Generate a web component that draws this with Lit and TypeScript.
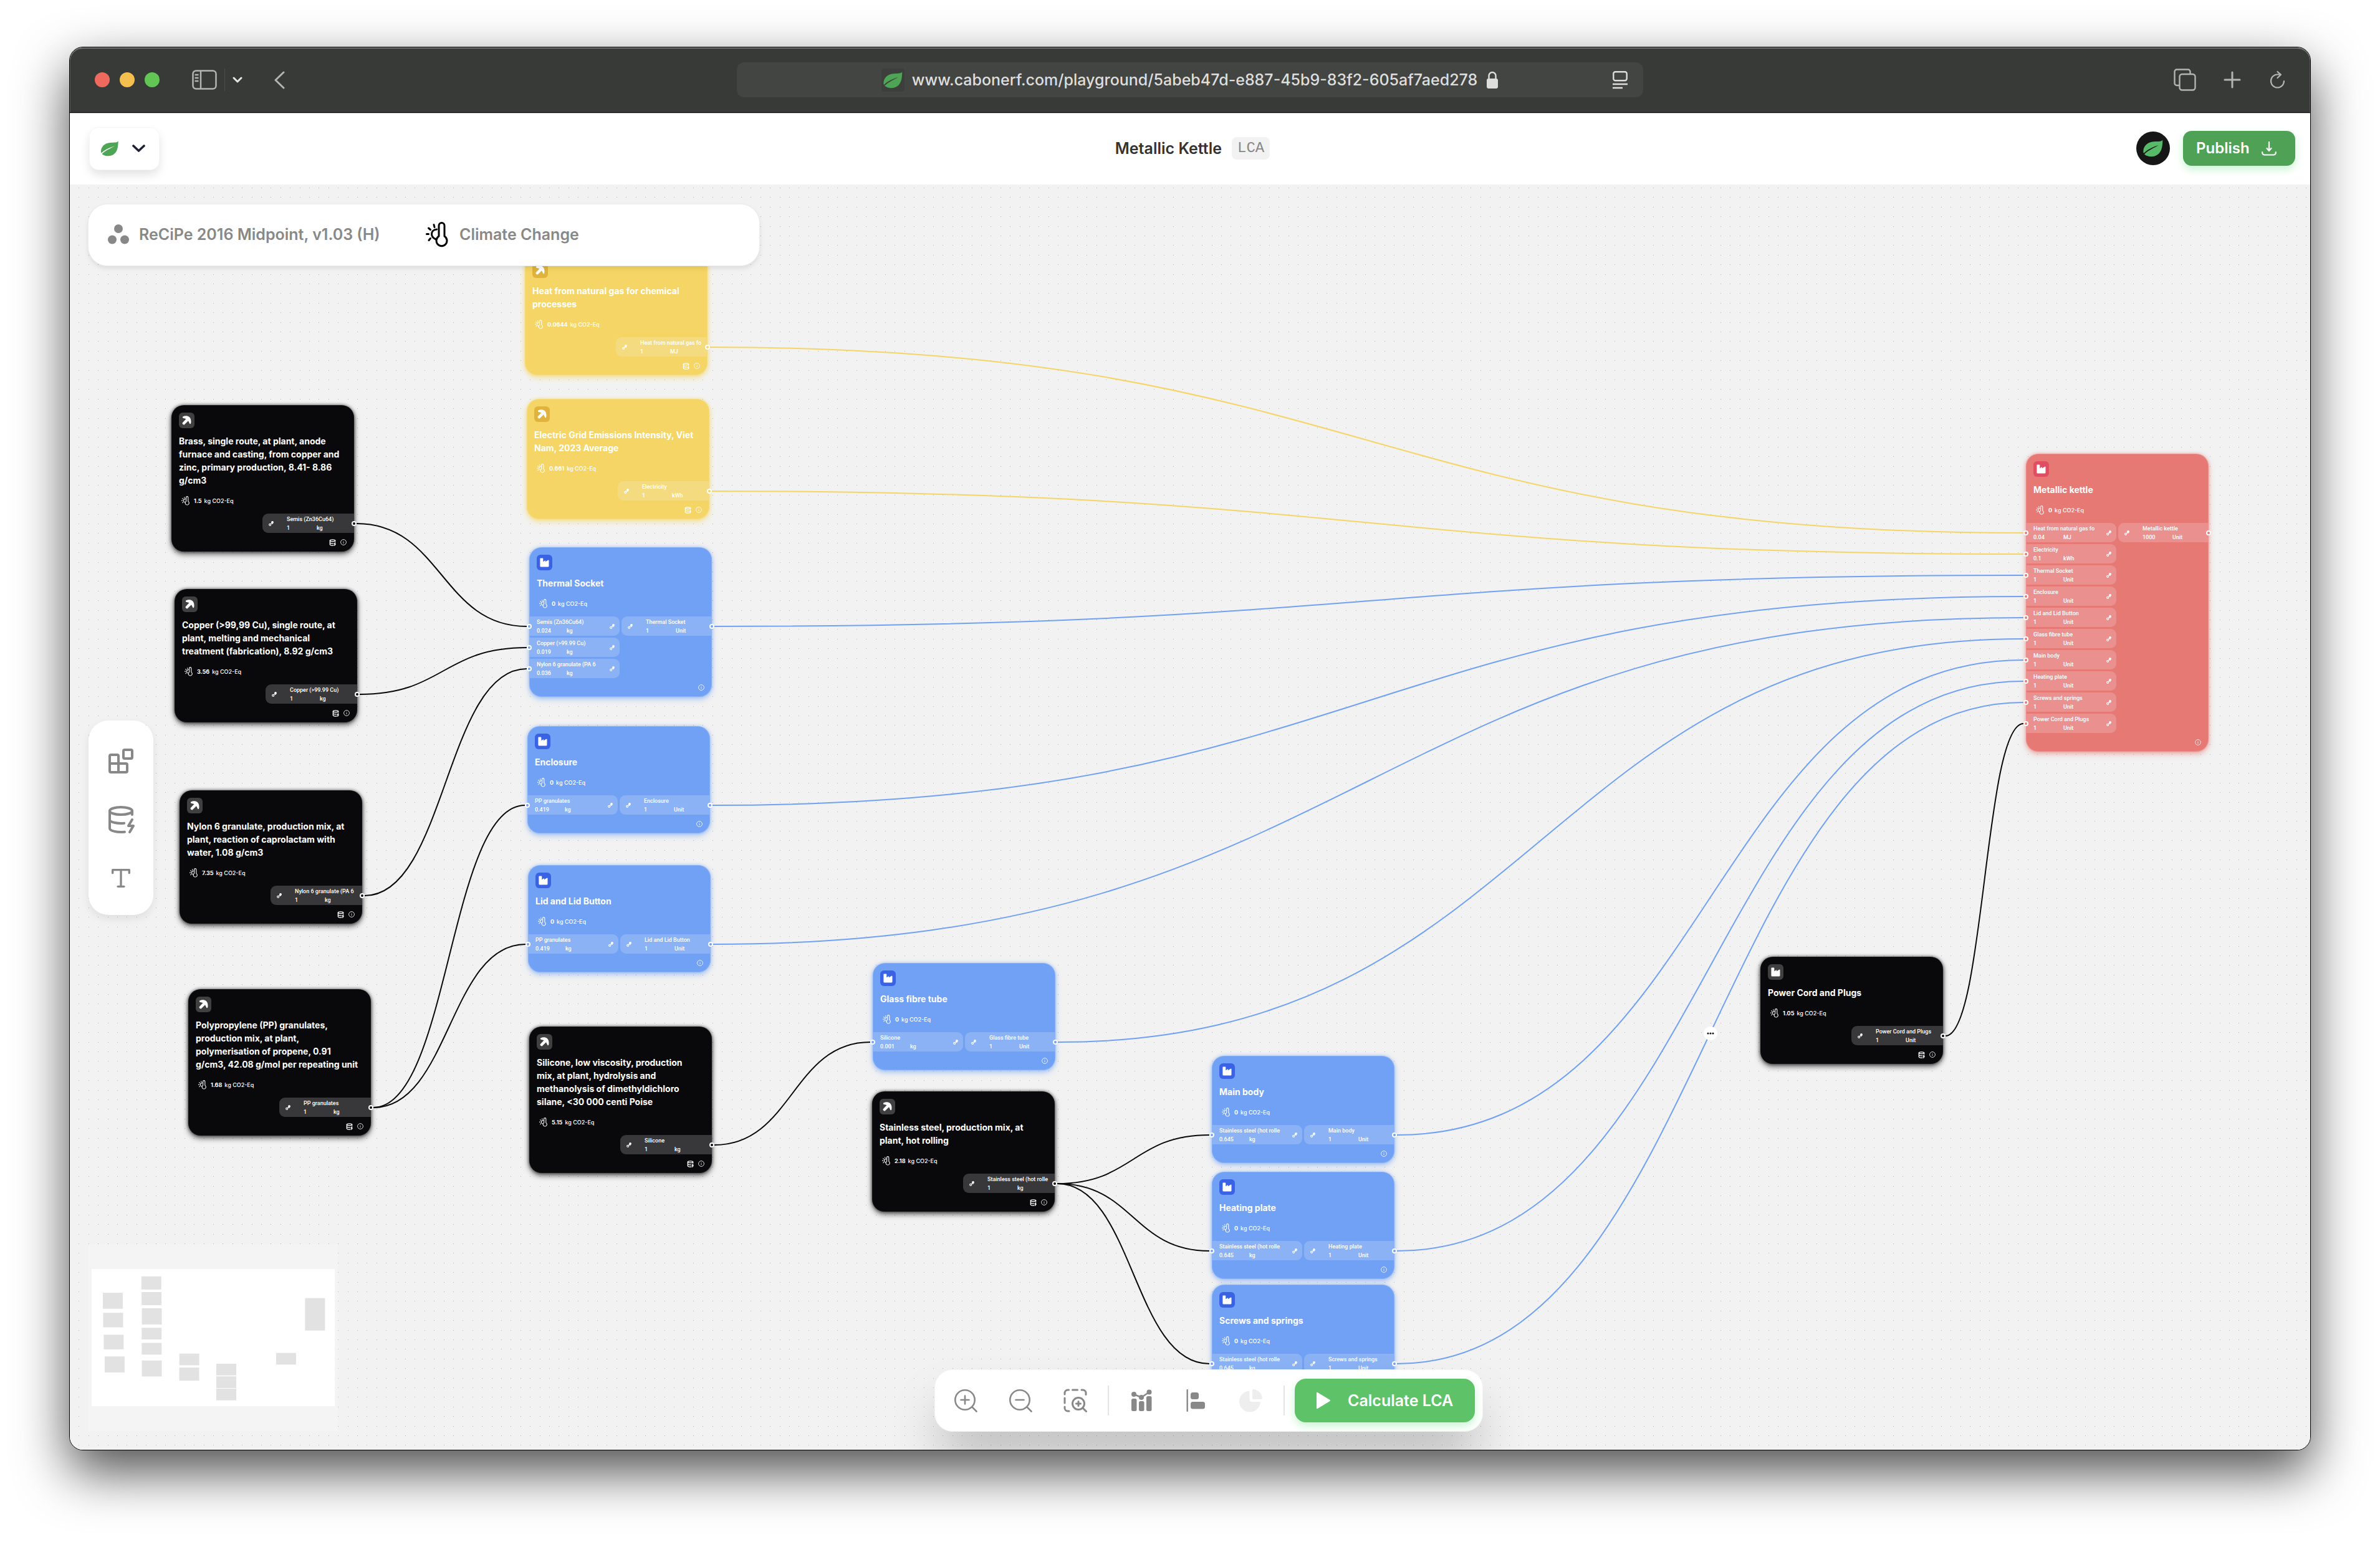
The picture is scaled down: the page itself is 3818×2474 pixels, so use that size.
import { LitElement, html, svg, css, nothing, TemplateResult } from "lit";
import { customElement, property } from "lit/decorators.js";
import { classMap } from "lit/directives/class-map.js";
import { styleMap } from "lit/directives/style-map.js";

type Tone = "black" | "yellow" | "blue" | "red";

interface Port {
  name: string;
  amount: string;
  unit: string;
}

interface ProcessNode {
  id: string;
  tone: Tone;
  icon: "pick" | "factory";
  x: number;
  y: number;
  title: string;
  titleRows: number;
  impact: string;
  inputs: Port[];
  output: Port;
  database?: boolean;
}

/* Geometry shared by the cards and the edges that join their ports. */
const CARD_WIDTH = 293;
const TITLE_LINE = 21;
const PORT_PITCH = 34;
const FIRST_PORT = 127;
const CARD_BASE = 172;

const port = (name: string, amount: string, unit: string): Port => ({ name, amount, unit });

const NODES: ProcessNode[] = [
  { id: "brass", tone: "black", icon: "pick", x: 163, y: 354, titleRows: 4, title: "Brass, single route, at plant, anode furnace and casting, from copper and zinc, primary production, 8.41- 8.86 g/cm3", impact: "1.5", inputs: [], output: port("Semis (Zn36Cu64)", "1", "kg"), database: true },
  { id: "copper", tone: "black", icon: "pick", x: 168, y: 649, titleRows: 3, title: "Copper (>99,99 Cu), single route, at plant, melting and mechanical treatment (fabrication), 8.92 g/cm3", impact: "3.56", inputs: [], output: port("Copper (>99.99 Cu)", "1", "kg"), database: true },
  { id: "nylon", tone: "black", icon: "pick", x: 176, y: 972, titleRows: 3, title: "Nylon 6 granulate, production mix, at plant, reaction of caprolactam with water, 1.08 g/cm3", impact: "7.35", inputs: [], output: port("Nylon 6 granulate (PA 6", "1", "kg"), database: true },
  { id: "pp", tone: "black", icon: "pick", x: 190, y: 1291, titleRows: 4, title: "Polypropylene (PP) granulates, production mix, at plant, polymerisation of propene, 0.91 g/cm3, 42.08 g/mol per repeating unit", impact: "1.68", inputs: [], output: port("PP granulates", "1", "kg"), database: true },
  { id: "heat", tone: "yellow", icon: "pick", x: 730, y: 113, titleRows: 2, title: "Heat from natural gas for chemical processes", impact: "0.0644", inputs: [], output: port("Heat from natural gas fo", "1", "MJ"), database: true },
  { id: "grid", tone: "yellow", icon: "pick", x: 733, y: 344, titleRows: 2, title: "Electric Grid Emissions Intensity, Viet Nam, 2023 Average", impact: "0.661", inputs: [], output: port("Electricity", "1", "kWh"), database: true },
  { id: "socket", tone: "blue", icon: "factory", x: 737, y: 582, titleRows: 1, title: "Thermal Socket", impact: "0", inputs: [port("Semis (Zn36Cu64)", "0.024", "kg"), port("Copper (>99.99 Cu)", "0.019", "kg"), port("Nylon 6 granulate (PA 6", "0.036", "kg")], output: port("Thermal Socket", "1", "Unit") },
  { id: "enclosure", tone: "blue", icon: "factory", x: 734, y: 869, titleRows: 1, title: "Enclosure", impact: "0", inputs: [port("PP granulates", "0.419", "kg")], output: port("Enclosure", "1", "Unit") },
  { id: "lid", tone: "blue", icon: "factory", x: 735, y: 1092, titleRows: 1, title: "Lid and Lid Button", impact: "0", inputs: [port("PP granulates", "0.419", "kg")], output: port("Lid and Lid Button", "1", "Unit") },
  { id: "silicone", tone: "black", icon: "pick", x: 737, y: 1351, titleRows: 4, title: "Silicone, low viscosity, production mix, at plant, hydrolysis and methanolysis of dimethyldichloro silane, <30 000 centi Poise", impact: "5.15", inputs: [], output: port("Silicone", "1", "kg"), database: true },
  { id: "glass", tone: "blue", icon: "factory", x: 1288, y: 1249, titleRows: 1, title: "Glass fibre tube", impact: "0", inputs: [port("Silicone", "0.001", "kg")], output: port("Glass fibre tube", "1", "Unit") },
  { id: "steel", tone: "black", icon: "pick", x: 1287, y: 1455, titleRows: 2, title: "Stainless steel, production mix, at plant, hot rolling", impact: "2.18", inputs: [], output: port("Stainless steel (hot rolle", "1", "kg"), database: true },
  { id: "body", tone: "blue", icon: "factory", x: 1832, y: 1398, titleRows: 1, title: "Main body", impact: "0", inputs: [port("Stainless steel (hot rolle", "0.645", "kg")], output: port("Main body", "1", "Unit") },
  { id: "plate", tone: "blue", icon: "factory", x: 1832, y: 1584, titleRows: 1, title: "Heating plate", impact: "0", inputs: [port("Stainless steel (hot rolle", "0.645", "kg")], output: port("Heating plate", "1", "Unit") },
  { id: "screws", tone: "blue", icon: "factory", x: 1832, y: 1765, titleRows: 1, title: "Screws and springs", impact: "0", inputs: [port("Stainless steel (hot rolle", "0.645", "kg")], output: port("Screws and springs", "1", "Unit") },
  { id: "cord", tone: "black", icon: "factory", x: 2712, y: 1239, titleRows: 1, title: "Power Cord and Plugs", impact: "1.05", inputs: [], output: port("Power Cord and Plugs", "1", "Unit"), database: true },
  {
    id: "kettle", tone: "red", icon: "factory", x: 3138, y: 432, titleRows: 1, title: "Metallic kettle", impact: "0",
    inputs: [
      port("Heat from natural gas fo", "0.04", "MJ"),
      port("Electricity", "0.1", "kWh"),
      port("Thermal Socket", "1", "Unit"),
      port("Enclosure", "1", "Unit"),
      port("Lid and Lid Button", "1", "Unit"),
      port("Glass fibre tube", "1", "Unit"),
      port("Main body", "1", "Unit"),
      port("Heating plate", "1", "Unit"),
      port("Screws and springs", "1", "Unit"),
      port("Power Cord and Plugs", "1", "Unit"),
    ],
    output: port("Metallic kettle", "1000", "Unit"),
  },
];

const EDGES: [string, string, number][] = [
  ["brass", "socket", 0],
  ["copper", "socket", 1],
  ["nylon", "socket", 2],
  ["pp", "enclosure", 0],
  ["pp", "lid", 0],
  ["silicone", "glass", 0],
  ["steel", "body", 0],
  ["steel", "plate", 0],
  ["steel", "screws", 0],
  ["heat", "kettle", 0],
  ["grid", "kettle", 1],
  ["socket", "kettle", 2],
  ["enclosure", "kettle", 3],
  ["lid", "kettle", 4],
  ["glass", "kettle", 5],
  ["body", "kettle", 6],
  ["plate", "kettle", 7],
  ["screws", "kettle", 8],
  ["cord", "kettle", 9],
];

const EDGE_COLORS: Record<Tone, string> = {
  black: "#09090b",
  yellow: "#f5d565",
  blue: "#70a1f5",
  red: "#e77975",
};

const nodeById = (id: string) => NODES.find((n) => n.id === id)!;
const portY = (n: ProcessNode, i: number) => n.y + FIRST_PORT + (n.titleRows - 1) * TITLE_LINE + i * PORT_PITCH;
const cardHeight = (n: ProcessNode) =>
  CARD_BASE + (n.titleRows - 1) * TITLE_LINE + Math.max(0, n.inputs.length - 1) * PORT_PITCH;

/* ---------- icons ---------- */

const leaf = (size: string) => html`<svg class=${size} viewBox="294 486 96 86" fill="currentColor" aria-hidden="true">
  <path d="M389 487C384 496 370 495 345 496C312 498 292 520 294 548C294 553 297 553 300 550C318 532 345 522 368 514C350 526 322 536 299 558C312 570 335 573 354 566C382 555 389 525 389 487Z" />
</svg>`;

const thermoSun = (weight: number) => html`<svg viewBox="0 0 36 41" fill="none" stroke="currentColor" stroke-width=${weight} stroke-linecap="round" aria-hidden="true">
  <path d="M21 23V6a4.5 4.5 0 0 1 9 0v17a8.5 8.5 0 1 1-9 0z" stroke-linejoin="round" />
  <path d="M17.5 12C12 12.500 9.500 16 9.500 19.500S12 26 15.500 27.500M13 4.500l1 4M4.500 10l3 2.500M1.500 19.500h3M5 29.500l2.500-3" />
</svg>`;

const pickIcon = html`<svg class="glyph" viewBox="0 0 15 15" fill="currentColor" aria-hidden="true">
  <path d="M1.500 1.300C6-.8 14.500-.6 14.500 9.500C14.500 12 14 13.500 12.800 13.300C12 13 11.800 11 10 8.300L3.800 14.300C2.500 15.200-.3 12.600.8 11.200L6.600 5C5 4.300 2.500 4.300 1.500 3.700C.8 3 .8 1.900 1.500 1.300Z" />
</svg>`;

const factoryIcon = html`<svg class="glyph" viewBox="0 0 15 15" fill="currentColor" aria-hidden="true">
  <path d="M1 .5h3.500q.8 0 .8.800v5L9 4v2.300L13.500 3.500q1 0 1 .8V13q0 1.500-1.500 1.500H1.800Q.4 14.500.4 13V1.200Q.4.500 1 .5z" />
</svg>`;

const linkIcon = html`<svg class="link" viewBox="0 0 8 8" fill="none" stroke="currentColor" stroke-width="1.200" aria-hidden="true">
  <circle cx="2.200" cy="5.800" r="1.500" /><circle cx="6" cy="2" r="1.300" fill="currentColor" /><path d="M3.300 4.700l1.600-1.600M5.300 4.900l1-1" />
</svg>`;

const databaseZap = (cls: string, weight: number) => html`<svg class=${cls} viewBox="0 0 24 24" fill="none" stroke="currentColor" stroke-width=${weight} stroke-linecap="round" stroke-linejoin="round" aria-hidden="true">
  <ellipse cx="12" cy="5" rx="9" ry="3" />
  <path d="M3 5v14a9 3 0 0 0 12 2.840M21 5v3M21 12l-3 5h4l-3 5M3 12a9 3 0 0 0 11.590 2.870" />
</svg>`;

const infoIcon = html`<svg class="info" viewBox="0 0 12 12" fill="none" stroke="currentColor" stroke-width="1.200" aria-hidden="true">
  <circle cx="6" cy="6" r="5.300" /><path d="M6 5.400v3M6 3.300v1" />
</svg>`;

/* ---------- process card ---------- */

@customElement("process-card")
export class ProcessCard extends LitElement {
  @property({ attribute: false }) node!: ProcessNode;

  static styles = css`
    :host { display: block; }
    .card {
      --fill: #09090b; --tile: #404040; --port: #38383a; --glow: rgba(0, 0, 0, 0.6); --rim: rgba(255, 255, 255, 0.04);
      display: flex; flex-direction: column;
      width: 293px; padding-top: 12px; box-sizing: border-box;
      border-radius: 20px; background: var(--fill); color: #fff;
      box-shadow: inset 0 0 0 1px var(--rim), 0 4px 10px var(--glow), 0 0 5px var(--glow);
      font-family: Inter, "Liberation Sans", sans-serif;
    }
    .yellow { --fill: #f5d565; --tile: #dfb33c; --port: #f5db80; --glow: rgba(245, 213, 101, 0.6); --rim: rgba(255, 255, 255, 0.15); }
    .blue { --fill: #70a1f5; --tile: #3a62e5; --port: #8ab2f4; --glow: rgba(112, 161, 245, 0.5); --rim: rgba(255, 255, 255, 0.15); }
    .red { --fill: #e77975; --tile: #e04e62; --port: #ea918f; --glow: rgba(231, 121, 117, 0.5); --rim: rgba(255, 255, 255, 0.15); }
    .tile {
      display: grid; place-items: center; width: 25px; height: 25px; margin-left: 12px;
      border-radius: 6px; background: var(--tile);
    }
    .glyph { width: 15px; height: 15px; display: block; }
    .title { margin: 10px 16px 15px 12px; font-size: 14px; line-height: 21px; font-weight: 700; }
    .impact {
      display: flex; align-items: center; gap: 7px; height: 15px; margin: 0 16px 13px;
      font-size: 9px; line-height: 15px; font-weight: 500;
    }
    .impact svg { width: 13px; height: 15px; }
    .impact b { font-weight: 700; }
    .impact .text { display: flex; gap: 4px; }
    .ports { display: grid; grid-template-columns: 145px 1fr; gap: 3px; align-items: start; }
    .source .ports { grid-template-columns: 1fr 147px; gap: 0; }
    .inputs { display: grid; gap: 3px; }
    .port {
      position: relative; display: grid; align-items: center; height: 31px; background: var(--port);
      font-family: Roboto, Inter, sans-serif; font-size: 9px; line-height: 14px; font-weight: 500;
    }
    .in { grid-template-columns: 98px 1fr; padding: 0 8px 0 12px; border-radius: 0 9px 9px 0; }
    .out { grid-template-columns: 29px 98px; padding-left: 10px; border-radius: 9px 0 0 9px; }
    .in .link { justify-self: end; }
    .link { width: 8px; height: 8px; }
    .name { display: block; overflow: hidden; white-space: nowrap; }
    .amount { display: grid; grid-template-columns: 48px 1fr; }
    .handle {
      position: absolute; top: 12px; width: 8px; height: 8px; box-sizing: border-box;
      border: 2px solid #fff; border-radius: 50%; background: var(--fill);
    }
    .in .handle { left: -4px; }
    .out .handle { right: -4px; }
    .foot { display: flex; justify-content: flex-end; align-items: center; gap: 7px; height: 30px; padding-right: 12px; }
    .db { width: 11px; height: 11px; }
    .info { width: 10px; height: 10px; opacity: 0.85; }
  `;

  private text(p: Port) {
    return html`<div>
      <span class="name">${p.name}</span>
      <span class="amount"><span>${p.amount}</span><span>${p.unit}</span></span>
    </div>`;
  }

  render() {
    const n = this.node;
    return html`<article class=${classMap({ card: true, [n.tone]: true, source: n.inputs.length === 0 })}>
      <div class="tile">${n.icon === "pick" ? pickIcon : factoryIcon}</div>
      <div class="title">${n.title}</div>
      <div class="impact">${thermoSun(3)}<div class="text"><b>${n.impact}</b><span>kg CO2-Eq</span></div></div>
      <div class="ports">
        <div class="inputs">
          ${n.inputs.map((p) => html`<div class="port in">${this.text(p)}${linkIcon}<span class="handle"></span></div>`)}
        </div>
        <div class="port out">${linkIcon}${this.text(n.output)}<span class="handle"></span></div>
      </div>
      <div class="foot">${n.database ? databaseZap("db", 3) : nothing}${infoIcon}</div>
    </article>`;
  }
}

/* ---------- application ---------- */

@customElement("app-root")
export class AppRoot extends LitElement {
  static styles = css`
    :host {
      display: flex; flex-direction: column; box-sizing: border-box; min-height: 100vh;
      padding: 75px 111px 147px; background: #fff; overflow: hidden;
      font-family: Inter, "Liberation Sans", sans-serif;
    }
    button { font: inherit; color: inherit; border: 0; background: none; padding: 0; margin: 0; cursor: pointer; }
    svg { display: block; }
    .window {
      flex: 1; display: flex; flex-direction: column; border: 1px solid #000; border-radius: 22px;
      box-shadow: 0 34px 84px rgba(0, 0, 0, 0.7); overflow: hidden; background: #f2f2f2;
    }

    .titlebar {
      display: grid; grid-template-columns: 1fr minmax(0, 1454px) 1fr; align-items: center;
      height: 104px; border-bottom: 1px solid #000; background: #383a38; color: #b3b4b3;
      border-radius: 21px 21px 0 0; box-shadow: inset 0 2px 0 #70736f, inset 1px 0 0 #5b5d5b, inset -1px 0 0 #5b5d5b;
    }
    .left, .right { display: flex; align-items: center; }
    .left { padding-left: 40px; }
    .lights { display: flex; gap: 16px; margin-right: 52px; }
    .light { width: 24px; height: 24px; border-radius: 50%; background: #ee6a5f; }
    .light.amber { background: #f5bf4f; }
    .light.green { background: #62c655; }
    .sidebar-icon { width: 40px; height: 32px; }
    .rule { width: 1px; height: 36px; background: #4c4e4c; margin: 0 12px; }
    .caret { width: 16px; height: 10px; color: #e4e5e4; }
    .back { width: 18px; height: 29px; margin-left: 50px; }
    .right { justify-content: flex-end; padding-right: 39px; }
    .tabs-icon { width: 36px; height: 36px; }
    .plus-icon { width: 28px; height: 28px; margin-left: 44px; }
    .reload-icon { width: 26px; height: 30px; margin-left: 46px; }
    .address {
      display: grid; grid-template-columns: 1fr auto 1fr; align-items: center; height: 56px; border-radius: 12px;
      background: #434543; color: #dededd; font-size: 25px; line-height: 32px; font-weight: 500;
    }
    .url { grid-column: 2; display: flex; align-items: center; }
    .favicon { display: grid; place-items: center; width: 37px; height: 37px; margin-right: 12px; border-radius: 4px; background: #3d3f3d; color: #4fa556; }
    .leaf-s { width: 31px; height: 27px; }
    .lock { width: 20px; height: 28px; margin-left: 14px; }
    .reader { width: 24px; height: 29px; justify-self: end; margin-right: 25px; }

    .appbar {
      display: grid; grid-template-columns: 1fr auto 1fr; align-items: center; height: 112px;
      border-top: 1px solid #bcbcbc; background: #fff; padding: 0 24px 2px 32px;
    }
    .menu {
      display: flex; align-items: center; gap: 22px; justify-self: start; width: 111px; height: 67px; padding-left: 18px;
      border-radius: 14px; background: #fff; color: #4fa556;
      box-shadow: 0 0 0 1px #f6f6f6, 0 8px 16px rgba(0, 0, 0, 0.12);
    }
    .leaf-m { width: 28px; height: 25px; }
    .menu .caret { width: 21px; height: 12px; color: #1c2233; }
    .project { display: flex; align-items: center; gap: 16px; font-size: 25px; line-height: 32px; font-weight: 600; color: #333; }
    .badge {
      height: 36px; padding: 0 9px; border-radius: 8px; background: #f2f2f2; color: #888;
      font-family: "Liberation Mono", monospace; font-size: 24px; line-height: 36px; font-weight: 400;
    }
    .actions { display: flex; justify-content: flex-end; align-items: center; gap: 21px; }
    .avatar { display: grid; place-items: center; width: 54px; height: 54px; border-radius: 50%; background: #161616; color: #57ba68; }
    .leaf-l { width: 32px; height: 28px; }
    .publish {
      display: flex; align-items: center; justify-content: space-between; width: 180px; height: 56px; padding: 0 30px 0 21px;
      border-radius: 14px; background: #4ea155; color: #fff; font-size: 24px; line-height: 32px; font-weight: 600;
      box-shadow: 0 6px 14px #c9f5d2;
    }
    .publish svg { width: 24px; height: 23px; }

    .canvas { position: relative; flex: 1; min-height: 2030px; overflow: hidden; background: #f2f2f2; }
    .flow { position: absolute; inset: 0; width: 100%; height: 100%; }
    .node { position: absolute; }
    .edge-menu {
      position: absolute; width: 22px; height: 22px; border-radius: 50%; background: #fff; color: #18181b;
      display: grid; place-items: center;
    }
    .edge-menu svg { width: 12px; height: 4px; }

    .filters {
      position: absolute; left: 30px; top: 32px; width: 1076px; height: 98px; box-sizing: border-box;
      display: flex; align-items: center; padding: 0 0 2px 31px; border-radius: 30px; background: #fff; color: #888;
      font-size: 25px; line-height: 32px; font-weight: 600;
      box-shadow: 0 0 0 1px #ededed, 0 4px 8px rgba(0, 0, 0, 0.1);
    }
    .filter { display: flex; align-items: center; }
    .filter:first-child { width: 510px; gap: 16px; }
    .filter:last-child { gap: 18px; }
    .method { width: 34px; height: 32px; }
    .filter:last-child svg { width: 36px; height: 41px; color: #000; }

    .tools {
      position: absolute; left: 30px; top: 860px; width: 104px; height: 312px; box-sizing: border-box;
      display: flex; flex-direction: column; align-items: center; justify-content: center; gap: 4px; padding-top: 6px;
      border-radius: 32px; background: #fff; color: #888; box-shadow: 0 6px 14px rgba(0, 0, 0, 0.08);
    }
    .tool { display: grid; place-items: center; width: 90px; height: 90px; }
    .tool svg { width: 48px; height: 48px; }
    .tool .type { width: 40px; height: 40px; }

    .minimap { position: absolute; left: 30px; bottom: 30px; width: 400px; height: 300px; background: #f4f4f4; }

    .dock {
      position: absolute; left: 1388px; bottom: 30px; width: 878px; height: 98px; box-sizing: border-box;
      display: flex; align-items: center; padding: 0 12px 0 5px; border-radius: 28px; background: #fff; color: #888;
      box-shadow: 0 0 0 1px #f4f4f4, 0 50px 80px -10px rgba(0, 0, 0, 0.25);
    }
    .dock-button { display: grid; place-items: center; width: 88px; height: 80px; }
    .dock-button svg { width: 38px; height: 38px; }
    .dock-button:disabled { color: #eee; }
    .split { width: 2px; height: 48px; background: #e4e4e7; margin: 0 8px; }
    .split + .calculate { margin-left: 8px; }
    .calculate {
      display: flex; align-items: center; gap: 28px; flex: 1; height: 70px; padding-left: 35px; border-radius: 18px;
      background: #5ec269; color: #fff; font-size: 25px; line-height: 32px; font-weight: 600;
      box-shadow: 0 6px 14px #c9f5d2;
    }
    .calculate svg { width: 22px; height: 28px; }
  `;

  private titlebar(): TemplateResult {
    return html`<header class="titlebar">
      <div class="left">
        <div class="lights"><span class="light"></span><span class="light amber"></span><span class="light green"></span></div>
        <button aria-label="Sidebar">
          <svg class="sidebar-icon" viewBox="0 0 40 32" fill="none" stroke="currentColor" stroke-width="2.500">
            <rect x="1.500" y="1.500" width="37" height="29" rx="5" /><path d="M14 2v28M4.500 8h6M4.500 13h6M4.500 18h6" />
          </svg>
        </button>
        <span class="rule"></span>
        <svg class="caret" viewBox="0 0 16 10" fill="none" stroke="currentColor" stroke-width="3" stroke-linecap="round" stroke-linejoin="round"><path d="M2 2l6 6 6-6" /></svg>
        <button aria-label="Back"><svg class="back" viewBox="0 0 18 29" fill="none" stroke="currentColor" stroke-width="3" stroke-linecap="round" stroke-linejoin="round"><path d="M16 2L3 14.500 16 27" /></svg></button>
      </div>
      <div class="address">
        <div class="url">
          <span class="favicon">${leaf("leaf-s")}</span>
          <span>www.cabonerf.com/playground/5abeb47d-e887-45b9-83f2-605af7aed278</span>
          <svg class="lock" viewBox="0 0 20 28"><rect x="1" y="12" width="18" height="16" rx="3" fill="currentColor" /><path d="M4.500 13V7.500a5.500 5.500 0 0 1 11 0V13" fill="none" stroke="currentColor" stroke-width="2.400" /></svg>
        </div>
        <svg class="reader" viewBox="0 0 24 29" fill="none" stroke="currentColor" stroke-width="2.400"><rect x="1.300" y="1.300" width="21.400" height="14" rx="3" /><path d="M0 21h24M0 27h16" /></svg>
      </div>
      <div class="right">
        <button aria-label="Tabs"><svg class="tabs-icon" viewBox="0 0 36 36" fill="none" stroke="currentColor" stroke-width="2.400"><rect x="9.500" y="9" width="25" height="25.500" rx="4" /><path d="M9 27H5a3.500 3.500 0 0 1-3.500-3.500V5A3.500 3.500 0 0 1 5 1.500h18A3.500 3.500 0 0 1 26.500 5v4" /></svg></button>
        <button aria-label="New tab"><svg class="plus-icon" viewBox="0 0 28 28" fill="none" stroke="currentColor" stroke-width="3" stroke-linecap="round"><path d="M14 2v24M2 14h24" /></svg></button>
        <button aria-label="Reload"><svg class="reload-icon" viewBox="0 0 26 30" fill="none" stroke="currentColor" stroke-width="2.200" stroke-linecap="round" stroke-linejoin="round"><path d="M23 17a10.500 10.500 0 1 1-10.500-10.500H18M12.500 2L18 6.800 12.500 12" /></svg></button>
      </div>
    </header>`;
  }

  private appbar(): TemplateResult {
    return html`<div class="appbar">
      <button class="menu" aria-label="Menu">
        ${leaf("leaf-m")}
        <svg class="caret" viewBox="0 0 21 12" fill="none" stroke="currentColor" stroke-width="3.600" stroke-linecap="round" stroke-linejoin="round"><path d="M2 2l8.500 8 8.500-8" /></svg>
      </button>
      <div class="project"><span>Metallic Kettle</span><span class="badge">LCA</span></div>
      <div class="actions">
        <span class="avatar">${leaf("leaf-l")}</span>
        <button class="publish">
          <span>Publish</span>
          <svg viewBox="0 0 24 23" fill="none" stroke="currentColor" stroke-width="2.200" stroke-linecap="round" stroke-linejoin="round"><path d="M12 1v13M8.500 11l3.500 4 3.500-4M1.200 17v1a3.500 3.500 0 0 0 3.500 3.500h14.600A3.500 3.500 0 0 0 22.800 18v-1" /></svg>
        </button>
      </div>
    </div>`;
  }

  private edges(): TemplateResult {
    const columns = [14, 30, 45, 61, 76];
    const rows = [5, 20, 36, 51, 67];
    return html`<svg class="flow" aria-hidden="true">
      <defs>
        <pattern id="dots" width="77" height="77" patternUnits="userSpaceOnUse">
          ${rows.map((y) => columns.map((x) => svg`<rect x=${x} y=${y} width="1" height="1" fill="#b4b4b4" />`))}
        </pattern>
      </defs>
      <rect width="100%" height="100%" fill="url(#dots)" />
      ${EDGES.map(([from, to, index]) => {
        const a = nodeById(from);
        const b = nodeById(to);
        const sx = a.x + CARD_WIDTH + 4;
        const sy = portY(a, 0);
        const tx = b.x - 4;
        const ty = portY(b, index);
        const mid = (sx + tx) / 2;
        return svg`<path d=${`M${sx} ${sy}C${mid} ${sy} ${mid} ${ty} ${tx} ${ty}`} fill="none" stroke=${EDGE_COLORS[a.tone]} stroke-width="2" />`;
      })}
    </svg>`;
  }

  private minimap(): TemplateResult {
    /* One minimap pixel stands for about nine canvas pixels. */
    const k = 9.17;
    return html`<svg class="minimap" viewBox="0 0 400 300" role="img" aria-label="Mini map">
      <rect x="5" y="40" width="390" height="220" fill="#fff" />
      ${NODES.map((n) => svg`<rect x=${5.200 + n.x / k} y=${39.500 + n.y / k} width=${CARD_WIDTH / k} height=${cardHeight(n) / k} fill="#e2e2e2" />`)}
    </svg>`;
  }

  private dock(): TemplateResult {
    return html`<div class="dock" role="toolbar">
      <button class="dock-button" aria-label="Zoom in"><svg viewBox="0 0 38 38" fill="none" stroke="currentColor" stroke-width="2.600" stroke-linecap="round"><circle cx="18" cy="18" r="15.700" /><path d="M30 30l6.500 6.500M18 11.500v13M11.500 18h13" /></svg></button>
      <button class="dock-button" aria-label="Zoom out"><svg viewBox="0 0 38 38" fill="none" stroke="currentColor" stroke-width="2.600" stroke-linecap="round"><circle cx="18" cy="18" r="15.700" /><path d="M30 30l6.500 6.500M11.500 18h13" /></svg></button>
      <button class="dock-button" aria-label="Zoom to selection"><svg viewBox="0 0 38 38" fill="none" stroke="currentColor" stroke-width="3" stroke-linecap="round"><path d="M2 9V7a5 5 0 0 1 5-5h1.500M14.500 2h8M29 2h2a5 5 0 0 1 5 5v2.500M2 15v8M2 29v2a5 5 0 0 0 5 5h2" /><circle cx="24" cy="24" r="9.500" /><path d="M31.500 31.500l5 5M24 20.500v7M20.500 24h7" /></svg></button>
      <span class="split"></span>
      <button class="dock-button" aria-label="Contribution chart"><svg viewBox="0 0 38 38" fill="currentColor"><rect x="3" y="16" width="8.500" height="20" rx="2.500" /><rect x="15" y="20" width="8.500" height="16" rx="2.500" /><rect x="27" y="12" width="8.500" height="24" rx="2.500" /><circle cx="7" cy="9" r="4" /><circle cx="19" cy="14" r="4" /><circle cx="31.500" cy="5.500" r="4" /><path d="M7 9l12 5L31.500 5.500" fill="none" stroke="currentColor" stroke-width="2.500" /></svg></button>
      <button class="dock-button" aria-label="Align"><svg viewBox="0 0 38 38" fill="currentColor"><rect x="3.500" y="1" width="2.400" height="36" rx="1" /><rect x="10" y="6" width="13" height="11" rx="3.500" /><rect x="10" y="21" width="23" height="11.500" rx="3.500" /></svg></button>
      <button class="dock-button" aria-label="Pie chart" disabled><svg viewBox="0 0 38 38" fill="currentColor"><path d="M16.500 3.500V17a4 4 0 0 0 4 4H34A17 17 0 1 1 16.500 3.500z" /><path d="M21 2.500q0-1.800 2-1.500A15.500 15.500 0 0 1 36.800 15q.2 2-1.600 2H23q-2 0-2-2z" /></svg></button>
      <span class="split"></span>
      <button class="calculate">
        <svg viewBox="0 0 22 28" fill="currentColor"><path d="M0 2Q0 .2 1.600 1L21.500 13q1 1 0 2L1.600 27Q0 27.800 0 26z" /></svg>
        <span>Calculate LCA</span>
      </button>
    </div>`;
  }

  render() {
    const from = nodeById("screws");
    const to = nodeById("kettle");
    const menuX = (from.x + CARD_WIDTH + to.x) / 2 - 11;
    const menuY = (portY(from, 0) + portY(to, 8)) / 2 - 11;
    return html`<div class="window">
      ${this.titlebar()}
      ${this.appbar()}
      <main class="canvas">
        ${this.edges()}
        ${NODES.map((n) => html`<process-card class="node" .node=${n} style=${styleMap({ left: `${n.x}px`, top: `${n.y}px` })}></process-card>`)}
        <button class="edge-menu" aria-label="Edge options" style=${styleMap({ left: `${menuX}px`, top: `${menuY}px` })}>
          <svg viewBox="0 0 12 4" fill="currentColor"><circle cx="2" cy="2" r="1.500" /><circle cx="6" cy="2" r="1.500" /><circle cx="10" cy="2" r="1.500" /></svg>
        </button>
        <div class="filters">
          <button class="filter">
            <svg class="method" viewBox="0 0 34 32" fill="currentColor"><circle cx="17" cy="7" r="7" /><circle cx="7" cy="24.500" r="7" /><circle cx="27" cy="24.500" r="7" /></svg>
            <span>ReCiPe 2016 Midpoint, v1.03 (H)</span>
          </button>
          <button class="filter">${thermoSun(3)}<span>Climate Change</span></button>
        </div>
        <nav class="tools">
          <button class="tool" aria-label="Processes"><svg viewBox="0 0 24 24" fill="none" stroke="currentColor" stroke-width="2" stroke-linecap="round" stroke-linejoin="round"><rect width="7" height="7" x="14" y="3" rx="1" /><path d="M10 21V8a1 1 0 0 0-1-1H4a1 1 0 0 0-1 1v12a1 1 0 0 0 1 1h12a1 1 0 0 0 1-1v-5a1 1 0 0 0-1-1H3" /></svg></button>
          <button class="tool" aria-label="Databases">${databaseZap("", 2)}</button>
          <button class="tool" aria-label="Text"><svg class="type" viewBox="0 0 24 24" fill="none" stroke="currentColor" stroke-width="2" stroke-linecap="round" stroke-linejoin="round"><path d="M4 7V4h16v3M9 20h6M12 4v16" /></svg></button>
        </nav>
        ${this.minimap()}
        ${this.dock()}
      </main>
    </div>`;
  }
}
